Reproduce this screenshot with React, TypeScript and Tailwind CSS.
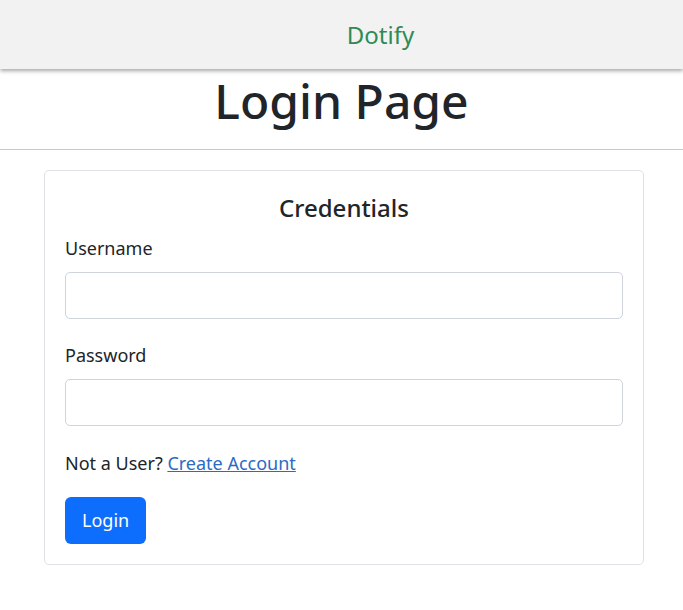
export default function App() {
  const font = { fontFamily: '"Segoe UI", "Noto Sans", "Open Sans", sans-serif' };
  return (
    <div className="min-h-[610px] bg-white text-[#212529]" style={font}>
      <header className="h-[69px] bg-[#f2f2f2] shadow-[0_2px_4px_rgba(0,0,0,0.35)] relative z-10 flex items-center justify-center">
        <span className="text-[24px] text-[#2e8b57] ml-[78px] leading-none">Dotify</span>
      </header>
      <h1 className="text-center text-[48px] font-medium leading-[1.2] pt-[3px] pb-[19px]">Login Page</h1>
      <hr className="border-t border-[#c8c8c8]" />
      <div className="px-[44px] pt-[20px]">
        <div className="w-[600px] border border-[#dee2e6] rounded-[5px] px-[20px] pt-[23px] pb-[20px]">
          <h4 className="text-center text-[24px] font-medium leading-[1.2] mb-[13px]">Credentials</h4>
          <label className="block text-[18px] leading-[1.5] mb-[10px]">Username</label>
          <input className="block w-full h-[47px] border border-[#ced4da] rounded-[5px] px-3 mb-[23px]" />
          <label className="block text-[18px] leading-[1.5] mb-[10px]">Password</label>
          <input type="password" className="block w-full h-[47px] border border-[#ced4da] rounded-[5px] px-3 mb-[24px]" />
          <p className="text-[18px] leading-[1.5] mb-[20px]">
            Not a User? <a href="#" className="text-[#2a6bc4] underline">Create Account</a>
          </p>
          <button className="h-[47px] px-[17px] bg-[#0d6efd] text-white text-[18px] rounded-[6px]">Login</button>
        </div>
      </div>
    </div>
  );
}
